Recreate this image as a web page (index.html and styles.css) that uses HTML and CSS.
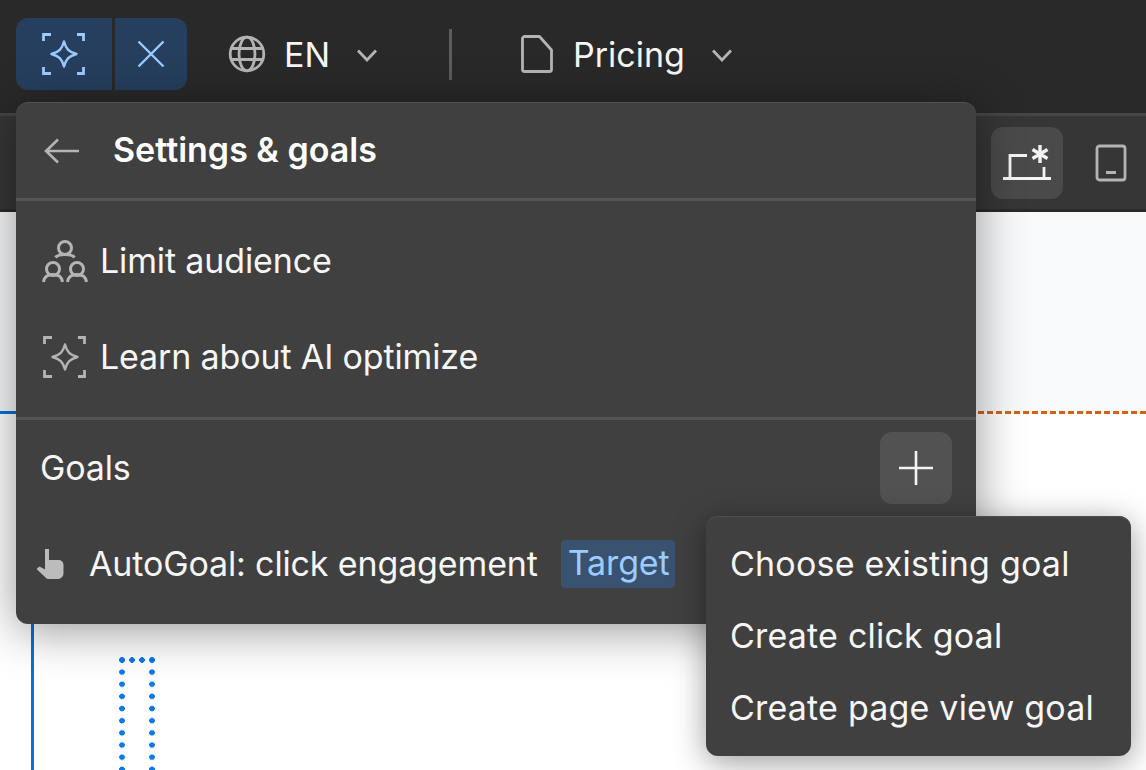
FILE: index.html
```html
<!DOCTYPE html>
<html lang="en">
<head>
<meta charset="utf-8">
<title>Settings &amp; goals</title>
<link rel="stylesheet" href="styles.css">
</head>
<body>
<div class="app">
  <header class="topbar">
    <div class="ai-group">
      <button class="ai-btn ai-main">
        <svg width="44" height="44" viewBox="0 0 44 44" fill="none" stroke="#9ccbff" stroke-width="2.800">
          <path d="M1.500 9V2.500H9M35 2.500H41.500V9M41.500 35V41.500H35M9 41.500H1.500V35"/>
          <path d="M22 9.500C24 17 27 20 34.500 22C27 24 24 27 22 34.500C20 27 17 24 9.500 22C17 20 20 17 22 9.500Z" stroke-width="2.400" stroke-linejoin="round"/>
        </svg>
      </button>
      <button class="ai-btn ai-close">
        <svg width="28" height="28" viewBox="0 0 28 28" fill="none" stroke="#9ccbff" stroke-width="2.400">
          <path d="M1.500 1.500L26.500 26.500M26.500 1.500L1.500 26.500"/>
        </svg>
      </button>
    </div>
    <div class="selector lang">
      <svg class="sel-icon" width="38" height="38" viewBox="0 0 38 38" fill="none" stroke="#b4b4b4" stroke-width="2.800">
        <circle cx="19" cy="19" r="16.800"/>
        <ellipse cx="19" cy="19" rx="8" ry="16.800"/>
        <path d="M3 13.500H35M3 24.500H35"/>
      </svg>
      <span class="sel-label">EN</span>
      <svg class="chev" width="20" height="13" viewBox="0 0 20 13" fill="none" stroke="#b4b4b4" stroke-width="2.800"><path d="M1 1.500L10 11L19 1.500"/></svg>
    </div>
    <div class="vdivider"></div>
    <div class="selector page">
      <svg class="sel-icon" width="32" height="38" viewBox="0 0 32 38" fill="none" stroke="#b4b4b4" stroke-width="2.800" stroke-linejoin="round">
        <path d="M3 1.500H18.500L30.500 15V34.500A2 2 0 0 1 28.500 36.500H3A2 2 0 0 1 1.500 34.500V3A2 2 0 0 1 3 1.500Z"/>
      </svg>
      <span class="sel-label">Pricing</span>
      <svg class="chev" width="20" height="13" viewBox="0 0 20 13" fill="none" stroke="#b4b4b4" stroke-width="2.800"><path d="M1 1.500L10 11L19 1.500"/></svg>
    </div>
  </header>

  <div class="toolbar">
    <button class="device device-active">
      <svg width="48" height="36" viewBox="0 0 48 36" fill="none" stroke="#f4f4f4" stroke-width="2.800">
        <path d="M0 33.500H48M7 33V10.500H24M41 22V33"/>
        <path d="M37 0V18M29.500 4.500L44.500 13.500M44.500 4.500L29.500 13.500" stroke-width="3.400"/>
      </svg>
    </button>
    <button class="device">
      <svg width="32" height="38" viewBox="0 0 32 38" fill="none" stroke="#b4b4b4" stroke-width="2.800">
        <rect x="2" y="2" width="28" height="34" rx="2.500"/>
        <path d="M11 28.500H21" stroke-width="3"/>
      </svg>
    </button>
  </div>

  <main class="canvas">
    <div class="canvas-top"></div>
    <div class="canvas-bottom">
      <div class="blue-line"></div>
      <div class="dotted-box"></div>
    </div>
    <div class="orange-line"></div>
    <div class="blue-top-line"></div>
  </main>

  <section class="panel">
    <div class="panel-head">
      <svg class="back" width="36" height="26" viewBox="0 0 36 26" fill="none" stroke="#b4b4b4" stroke-width="2.600"><path d="M35 13H3M14 1.500L2 13L14 24.500"/></svg>
      <h1 class="panel-title">Settings &amp; goals</h1>
    </div>
    <div class="panel-section">
      <div class="panel-row">
        <svg class="row-icon" width="46" height="44" viewBox="0 0 46 44" fill="none" stroke="#b4b4b4" stroke-width="3">
          <circle cx="23" cy="9" r="6.500"/>
          <path d="M13.500 18.500C15 16.500 18.500 15.500 23 15.500C27.500 15.500 31 16.500 32.500 18.500"/>
          <circle cx="11" cy="30" r="6.500"/>
          <path d="M1.500 43C2 38 5.500 35.500 11 35.500C16.500 35.500 20 38 20.500 43"/>
          <circle cx="35" cy="30" r="6.500"/>
          <path d="M25.500 43C26 38 29.500 35.500 35 35.500C40.500 35.500 44 38 44.500 43"/>
        </svg>
        <span class="row-text">Limit audience</span>
      </div>
      <div class="panel-row">
        <svg class="row-icon" width="46" height="44" viewBox="0 0 44 44" fill="none" stroke="#b4b4b4" stroke-width="2.800">
          <path d="M1.500 9V2.500H9M35 2.500H41.500V9M41.500 35V41.500H35M9 41.500H1.500V35"/>
          <path d="M22 9.500C24 17 27 20 34.500 22C27 24 24 27 22 34.500C20 27 17 24 9.500 22C17 20 20 17 22 9.500Z" stroke-width="2.400" stroke-linejoin="round"/>
        </svg>
        <span class="row-text">Learn about AI optimize</span>
      </div>
    </div>
    <div class="goals">
      <div class="goals-head">
        <span class="row-text">Goals</span>
        <button class="add-btn">
          <svg width="34" height="34" viewBox="0 0 34 34" fill="none" stroke="#f4f4f4" stroke-width="2.600"><path d="M17 0V34M0 17H34"/></svg>
        </button>
      </div>
      <div class="goal-row">
        <svg class="hand" width="28" height="30" viewBox="0 0 28 30" fill="#bcbcbc">
          <path d="M9 0H13V11H22C25.500 11 27.500 13 27.500 16V24C27.500 27.500 25 30 21.500 30H13C11.500 30 10.500 29.500 9.500 28.500L0.500 20L3.500 17.500L9 20.500Z"/>
        </svg>
        <span class="goal-name row-text">AutoGoal: click engagement</span>
        <span class="tag">Target</span>
      </div>
    </div>
  </section>

  <nav class="menu">
    <div class="menu-item">Choose existing goal</div>
    <div class="menu-item">Create click goal</div>
    <div class="menu-item">Create page view goal</div>
  </nav>
</div>
</body>
</html>
```
FILE: styles.css
```css
* { box-sizing: border-box; }
html, body { margin: 0; padding: 0; }
body {
  width: 1146px;
  height: 770px;
  overflow: hidden;
  font-family: Inter, "Liberation Sans", sans-serif;
  color: #f6f6f6;
  background: #fff;
}
button { border: 0; padding: 0; margin: 0; color: inherit; font: inherit; }
.app {
  position: relative;
  width: 1146px;
  height: 770px;
  display: flex;
  flex-direction: column;
  overflow: hidden;
}
.topbar {
  flex: 0 0 116px;
  display: flex;
  align-items: flex-start;
  padding: 18px 0 0 16px;
  background: #292929;
  border-bottom: 3px solid #454545;
}
.ai-group { display: flex; gap: 3px; }
.ai-btn {
  height: 72px;
  display: flex;
  align-items: center;
  justify-content: center;
  background: #263f5e;
}
.ai-main { width: 96px; border-radius: 12px 0 0 12px; }
.ai-close { width: 72px; border-radius: 0 12px 12px 0; }
.selector {
  display: flex;
  align-items: center;
  height: 72px;
}
.lang { margin-left: 41px; }
.page { margin-left: 69px; }
.sel-label { font-size: 34px; line-height: 72px; margin-top: 2px; }
.lang .sel-label { margin-left: 18px; }
.page .sel-label { margin-left: 20px; }
.chev { margin-left: 27px; margin-top: 3px; }
.vdivider {
  width: 3px;
  height: 51px;
  margin: 11px 0 0 72px;
  background: #5c5c5c;
}
.toolbar {
  flex: 0 0 96px;
  display: flex;
  align-items: center;
  justify-content: flex-end;
  gap: 32px;
  padding-right: 19px;
  background: #363636;
  border-bottom: 3px solid #2a2a2a;
}
.device {
  display: flex;
  align-items: center;
  justify-content: center;
  height: 72px;
  background: transparent;
}
.device-active {
  width: 72px;
  border-radius: 12px;
  background: #4a4a4a;
}
.canvas {
  position: relative;
  flex: 1;
  display: flex;
  flex-direction: column;
  background: #fff;
}
.canvas-top { flex: 0 0 199px; background: #f8f9fb; }
.canvas-bottom { position: relative; flex: 1; background: #fff; }
.blue-line {
  position: absolute;
  left: 31px;
  top: 0;
  bottom: 0;
  width: 3px;
  background: #0a6fd8;
}
.blue-top-line {
  position: absolute;
  left: 0;
  top: 199px;
  width: 40px;
  height: 3px;
  background: #0a6fd8;
}
.orange-line {
  position: absolute;
  left: 960px;
  right: 0;
  top: 199px;
  height: 3px;
  background: repeating-linear-gradient(90deg, #d9600f 0 6px, transparent 6px 9px);
}
.dotted-box {
  position: absolute;
  left: 119px;
  top: 246px;
  width: 36px;
  height: 200px;
  background-image:
    radial-gradient(circle, #0a78ee 2.6px, transparent 3px),
    radial-gradient(circle, #0a78ee 2.6px, transparent 3px),
    radial-gradient(circle, #0a78ee 2.6px, transparent 3px);
  background-size: 10px 6px, 6px 12.17px, 6px 12.17px;
  background-position: -2px 0, 0 9px, 30px 9px;
  background-repeat: repeat-x, repeat-y, repeat-y;
}
.panel {
  position: absolute;
  left: 16px;
  top: 102px;
  width: 960px;
  height: 522px;
  background: #404040;
  border-top: 1px solid #525252;
  border-radius: 12px;
  box-shadow: 0 6px 48px rgba(0, 0, 0, 0.42);
  font-size: 34px;
  letter-spacing: -0.14px;
}
.panel-head {
  display: flex;
  align-items: center;
  height: 98px;
  padding-left: 28px;
  border-bottom: 3px solid #555;
}
.panel-title {
  margin: -2px 0 0 33px;
  font-size: 34px;
  font-weight: 600;
  letter-spacing: 0;
  color: #fff;
}
.panel-section {
  display: flex;
  flex-direction: column;
  height: 219px;
  padding-top: 12px;
  border-bottom: 3px solid #555;
}
.panel-row {
  display: flex;
  align-items: center;
  height: 96px;
  padding-left: 26px;
}
.row-icon { margin-right: 12px; }
.row-text { margin-top: -2px; }
.goals { padding: 0 24px; }
.goals-head {
  display: flex;
  align-items: center;
  justify-content: space-between;
  height: 72px;
  margin-top: 12px;
}
.add-btn {
  width: 72px;
  height: 72px;
  display: flex;
  align-items: center;
  justify-content: center;
  border-radius: 12px;
  background: #525252;
}
.goal-row {
  display: flex;
  align-items: center;
  height: 72px;
  margin-top: 24px;
}
.hand { margin-left: -4px; margin-right: 25px; }
.goal-name { white-space: nowrap; }
.tag {
  margin-left: 23px;
  padding: 0 5px 0 7px;
  height: 48px;
  line-height: 46px;
  border-radius: 4px;
  background: #38526f;
  color: #9ccbff;
}
.menu {
  position: absolute;
  left: 706px;
  top: 516px;
  width: 425px;
  height: 240px;
  padding: 12px 0;
  background: #404040;
  border-radius: 12px;
  box-shadow: inset 0 1px 0 #4e4e4e, 0 6px 32px rgba(0, 0, 0, 0.4);
  font-size: 34px;
}
.menu-item {
  height: 72px;
  line-height: 72px;
  padding-left: 24px;
  white-space: nowrap;
  letter-spacing: 0.2px;
}
```
